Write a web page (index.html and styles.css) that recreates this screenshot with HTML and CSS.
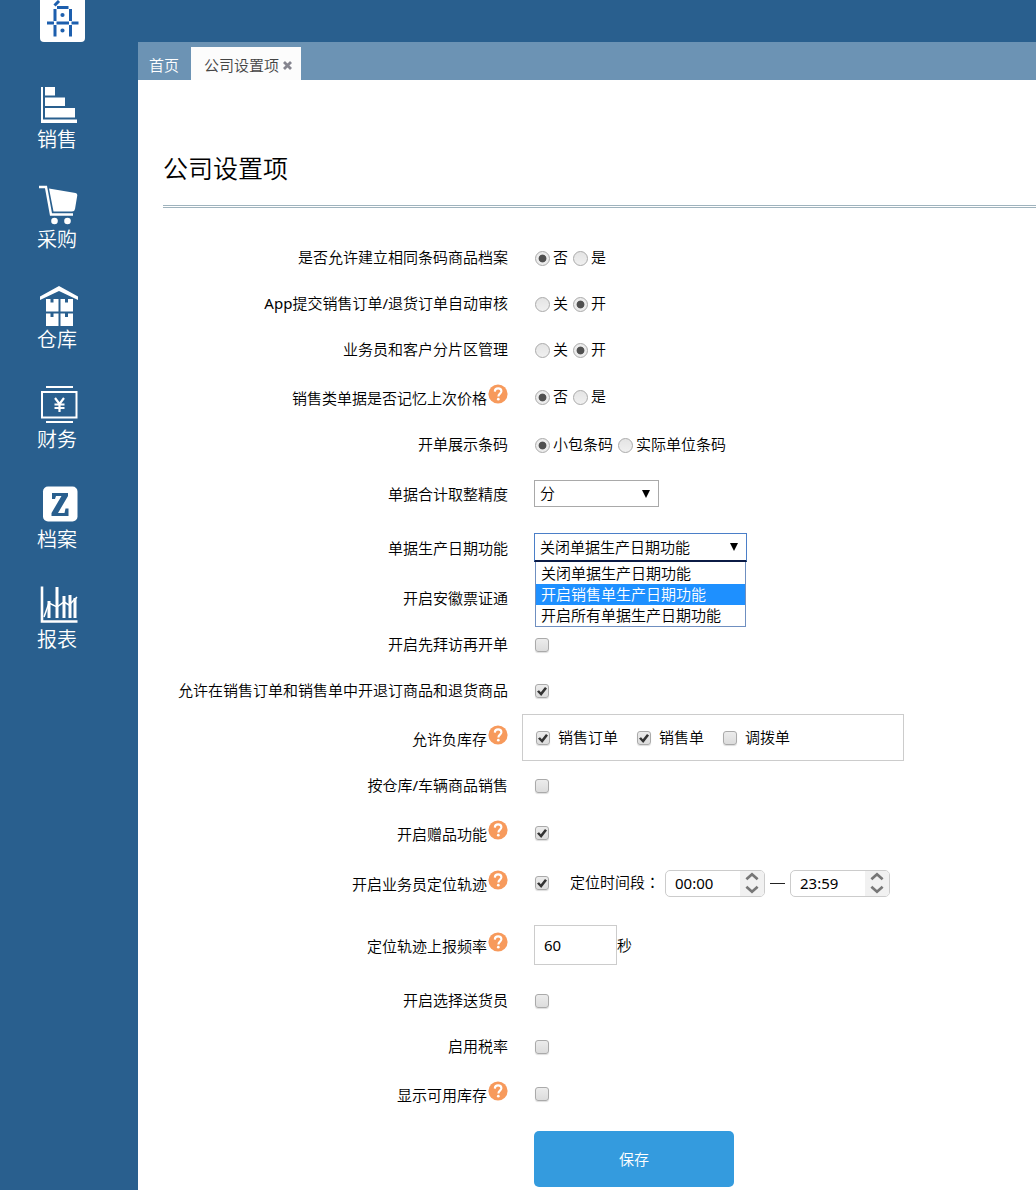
FILE: index.html
```html
<!DOCTYPE html>
<html lang="zh-CN">
<head>
  <meta charset="UTF-8" />
  <meta name="viewport" content="width=device-width, initial-scale=1.0"/>
  <title>公司设置项</title>
  <link rel="stylesheet" href="styles.css">
</head>
<body>
  <svg class="sprite">
    <symbol id="help" viewBox="0 0 20 20">
      <circle cx="10" cy="10" r="9.6" fill="#f79a5c"/>
      <path d="M6.8 7.600C6.900 5.400 8.200 4.400 10.100 4.400c2 0 3.300 1.100 3.300 2.800 0 2.300-3 2.600-3 5.200" fill="none" stroke="#fff" stroke-width="2.1"/>
      <circle cx="10.3" cy="15.2" r="1.35" fill="#fff"/>
    </symbol>
    <symbol id="up" viewBox="0 0 12 8">
      <path d="M1 6.500L6 2l5 4.500" fill="none" stroke="#777" stroke-width="2.4"/>
    </symbol>
    <symbol id="down" viewBox="0 0 12 8">
      <path d="M1 1.500L6 6l5-4.500" fill="none" stroke="#777" stroke-width="2.4"/>
    </symbol>
  </svg>

  <aside class="sidebar">
    <div class="logo">
      <svg width="45" height="42" viewBox="0 0 45 42" fill="none" stroke="#1d5fae" stroke-width="3">
        <path d="M19 1l-4.500 4.500M17 7.500h11.500M15 9v12M30.500 9v12M15 25v11.500M30.500 25v11.500M7 23h7M16.500 23h12.500M31.500 23H38.500"/>
        <circle cx="22.500" cy="15" r="1" stroke-width="2.200"/>
        <circle cx="22.500" cy="30.500" r="1" stroke-width="2.200"/>
      </svg>
    </div>
    <nav class="menu">
      <a class="menu-item">
        <svg width="40" height="40" viewBox="0 0 40 40" fill="#fff">
          <path d="M3 2h2v32.500h34V38H3zM7 2h10v8.500H7zM7 12.500h20v8.500H7zM7 23h30v9.500H7z"/>
        </svg>
        <span>销售</span>
      </a>
      <a class="menu-item">
        <svg width="40" height="40" viewBox="0 0 40 40" fill="#fff">
          <path d="M1 2h7l5 27.500h22" fill="none" stroke="#fff" stroke-width="2.4"/>
          <path d="M11 3.500l26.500 4.500q2 .4 1.800 2.300L37 24q-.4 2.500-3 2.500H15.500z"/>
          <circle cx="16.500" cy="36" r="3.300"/>
          <circle cx="29.500" cy="36" r="3.300"/>
        </svg>
        <span>采购</span>
      </a>
      <a class="menu-item">
        <svg width="40" height="40" viewBox="0 0 40 40" fill="#fff">
          <path d="M2 11.500L21 1l19 10.500V15L21 6 2 15z"/>
          <path d="M8 14h4.500v3.500h3V14h5v12.500H8zM22.500 14h4.500v3.500h3V14h5v12.500H22.500zM8 28.500h4.500V32h3v-3.500h5V41H8zM22.500 28.500h4.500V32h3v-3.500h5V41H22.500z"/>
        </svg>
        <span>仓库</span>
      </a>
      <a class="menu-item">
        <svg width="40" height="40" viewBox="0 0 40 40" fill="none" stroke="#fff" stroke-width="2">
          <path d="M8 2h27M8 37h27M4 7h34.500v25.500H4z"/>
          <path d="M17 13l4.500 6 4.500-6M16.500 19.500h10M16.500 23h10M21.500 19v8" stroke-width="2.200"/>
        </svg>
        <span>财务</span>
      </a>
      <a class="menu-item">
        <svg width="40" height="40" viewBox="0 0 40 40">
          <rect x="5" y="1.500" width="34.500" height="35" rx="5" fill="#fff"/>
          <path d="M14 14V8h16v3L20 28h6.500l1-4.500h3V31H13.500v-3L23.500 11h-5.500l-1 3z" fill="#295f8e"/>
        </svg>
        <span>档案</span>
      </a>
      <a class="menu-item">
        <svg width="40" height="40" viewBox="0 0 40 40" fill="none" stroke="#fff">
          <path d="M4 1.500V36.500h35.500" stroke-width="2.600"/>
          <path d="M11 16v17M19 2v31M26 11v22M32 10v23M37 13v20" stroke-width="3"/>
          <path d="M6 32l5-14 8 4 7-5 5 3 8-8" stroke-width="1.500"/>
        </svg>
        <span>报表</span>
      </a>
    </nav>
  </aside>

  <div class="main">
    <header class="topbar"></header>
    <div class="tabs">
      <a class="tab">首页</a>
      <a class="tab active">公司设置项
        <svg width="9" height="9" viewBox="0 0 9 9"><path d="M1 1l7 7M8 1L1 8" stroke="#85858f" stroke-width="2.800"/></svg>
      </a>
    </div>

    <div class="content">
      <h1>公司设置项</h1>
      <div class="double-line"></div>

      <form class="settings">
        <div class="row">
          <div class="label">是否允许建立相同条码商品档案</div>
          <div class="control">
            <label><input type="radio" name="barcode" checked>否</label>
            <label><input type="radio" name="barcode">是</label>
          </div>
        </div>
        <div class="row">
          <div class="label"><span class="latin">App</span>提交销售订单<span class="latin">/</span>退货订单自动审核</div>
          <div class="control">
            <label><input type="radio" name="audit">关</label>
            <label><input type="radio" name="audit" checked>开</label>
          </div>
        </div>
        <div class="row">
          <div class="label">业务员和客户分片区管理</div>
          <div class="control">
            <label><input type="radio" name="area">关</label>
            <label><input type="radio" name="area" checked>开</label>
          </div>
        </div>
        <div class="row h48">
          <div class="label has-help">销售类单据是否记忆上次价格<svg class="help"><use href="#help"/></svg></div>
          <div class="control">
            <label><input type="radio" name="price" checked>否</label>
            <label><input type="radio" name="price">是</label>
          </div>
        </div>
        <div class="row h48">
          <div class="label">开单展示条码</div>
          <div class="control">
            <label><input type="radio" name="show" checked>小包条码</label>
            <label><input type="radio" name="show">实际单位条码</label>
          </div>
        </div>
        <div class="row h50">
          <div class="label label-select">单据合计取整精度</div>
          <div class="control">
            <div class="select select-small"><span>分</span><i class="arrow"></i></div>
          </div>
        </div>
        <div class="row h57">
          <div class="label label-select">单据生产日期功能</div>
          <div class="control">
            <div class="select select-open">
              <span>关闭单据生产日期功能</span><i class="arrow"></i>
              <ul class="options">
                <li>关闭单据生产日期功能</li>
                <li class="selected">开启销售单生产日期功能</li>
                <li>开启所有单据生产日期功能</li>
              </ul>
            </div>
          </div>
        </div>
        <div class="row h45">
          <div class="label">开启安徽票证通</div>
          <div class="control"></div>
        </div>
        <div class="row h47">
          <div class="label">开启先拜访再开单</div>
          <div class="control"><input type="checkbox"></div>
        </div>
        <div class="row">
          <div class="label">允许在销售订单和销售单中开退订商品和退货商品</div>
          <div class="control"><input type="checkbox" checked></div>
        </div>
        <div class="row h47">
          <div class="label has-help">允许负库存<svg class="help"><use href="#help"/></svg></div>
          <div class="stock-box">
            <label><input type="checkbox" checked>销售订单</label>
            <label><input type="checkbox" checked>销售单</label>
            <label><input type="checkbox">调拨单</label>
          </div>
        </div>
        <div class="row h49">
          <div class="label">按仓库<span class="latin">/</span>车辆商品销售</div>
          <div class="control"><input type="checkbox"></div>
        </div>
        <div class="row h46">
          <div class="label has-help">开启赠品功能<svg class="help"><use href="#help"/></svg></div>
          <div class="control"><input type="checkbox" checked></div>
        </div>
        <div class="row h54">
          <div class="label has-help">开启业务员定位轨迹<svg class="help"><use href="#help"/></svg></div>
          <div class="control">
            <input type="checkbox" checked>
            <span class="time-label">定位时间段<span class="colon" lang="zh-TW">：</span></span>
            <div class="spinner"><span class="latin">00:00</span><div class="spin-btns"><svg><use href="#up"/></svg><svg><use href="#down"/></svg></div></div>
            <span class="dash"></span>
            <div class="spinner"><span class="latin">23:59</span><div class="spin-btns"><svg><use href="#up"/></svg><svg><use href="#down"/></svg></div></div>
          </div>
        </div>
        <div class="row h69">
          <div class="label has-help">定位轨迹上报频率<svg class="help"><use href="#help"/></svg></div>
          <div class="control"><input type="text" class="freq latin" value="60">秒</div>
        </div>
        <div class="row h44">
          <div class="label">开启选择送货员</div>
          <div class="control"><input type="checkbox"></div>
        </div>
        <div class="row h48">
          <div class="label">启用税率</div>
          <div class="control"><input type="checkbox"></div>
        </div>
        <div class="row h46">
          <div class="label has-help">显示可用库存<svg class="help"><use href="#help"/></svg></div>
          <div class="control"><input type="checkbox"></div>
        </div>
        <button type="button" class="save">保存</button>
      </form>
    </div>
  </div>
</body>
</html>
```

FILE: styles.css
```css
* {
  box-sizing: border-box;
}

body {
  margin: 0;
  display: flex;
  height: 1190px;
  overflow: hidden;
  font-family: "Noto Sans", "Noto Sans CJK SC", sans-serif;
  font-size: 15px;
  font-weight: 350;
  color: #000;
  background: #fff;
}

.sprite {
  display: none;
}

/* sidebar */
.sidebar {
  width: 138px;
  flex: none;
  background: #295f8e;
}

.logo {
  width: 45px;
  height: 42px;
  margin-left: 40px;
  background: #fff;
  border-radius: 0 0 4px 4px;
}

.logo svg {
  display: block;
}

.menu {
  padding-top: 43px;
}

.menu-item {
  display: flex;
  flex-direction: column;
  height: 100px;
  padding-left: 38px;
  color: #fff;
  font-size: 20px;
  line-height: 30px;
}

.menu-item svg {
  overflow: visible;
}

.menu-item span {
  margin-left: -1px;
}

/* top */
.main {
  flex: 1;
  min-width: 0;
}

.topbar {
  height: 42px;
  background: #295f8e;
}

.tabs {
  display: flex;
  height: 38px;
  padding-top: 5px;
  background: #6c93b4;
}

.tab {
  display: flex;
  align-items: center;
  padding: 1px 12px 0 11px;
  color: #fff;
}

.tab.active {
  width: 110px;
  padding: 1px 0 0 13px;
  gap: 4px;
  background: #fcfcfc;
  color: #444;
}

.tab svg {
  margin-top: 2px;
}

.content {
  padding: 70px 0 0 25px;
}

h1 {
  margin: 0;
  height: 36px;
  line-height: 36px;
  font-size: 25px;
  font-weight: 350;
}

.double-line {
  height: 3px;
  margin-top: 19px;
  border-top: 1px solid #9fb3bd;
  border-bottom: 1px solid #9fb3bd;
}

/* form */
.settings {
  padding-top: 27px;
}

.row {
  display: flex;
  align-items: center;
  height: 46px;
}

.h44 { height: 44px; }
.h45 { height: 45px; }
.h46 { height: 46px; }
.h47 { height: 47px; }
.h48 { height: 48px; }
.h49 { height: 49px; }
.h50 { height: 50px; }
.h54 { height: 54px; }
.h57 { height: 57px; }
.h69 { height: 69px; }

.label {
  display: flex;
  justify-content: flex-end;
  width: 345px;
  flex: none;
  padding-bottom: 2px;
  line-height: 22px;
  white-space: nowrap;
}

.label-select {
  padding-bottom: 0;
}

.latin {
  font-weight: 400;
}

.has-help {
  padding: 2px 0 0;
}

.help {
  width: 20px;
  height: 20px;
  margin: -3px 0 0 1px;
}

.control {
  display: flex;
  align-items: center;
  padding-left: 27px;
  line-height: 22px;
}

.control label,
.stock-box label {
  display: flex;
  align-items: center;
}

.control label {
  margin: -2px 5px 0 0;
}

input[type="radio"] {
  appearance: none;
  width: 15px;
  height: 15px;
  margin: 3px 3px 0 0;
  border: 1px solid #aaa;
  border-radius: 50%;
  background: linear-gradient(#e4e4e4, #f0f0f0);
}

input[type="radio"]:checked {
  background: radial-gradient(circle, #505050 3.500px, #ececec 4.300px);
}

input[type="checkbox"] {
  appearance: none;
  width: 14px;
  height: 14px;
  margin: 0;
  border: 1px solid #aaa;
  border-radius: 3px;
  background: linear-gradient(#ececec, #dcdcdc);
  box-shadow: 0 1px 1px #ddd;
}

input[type="checkbox"]:checked::before {
  content: '';
  display: block;
  width: 10px;
  height: 9px;
  margin: 2px 1px;
  background: #333;
  clip-path: polygon(0 50%, 20% 36%, 38% 58%, 80% 0, 100% 18%, 42% 100%);
}

.select {
  position: relative;
  display: flex;
  align-items: center;
  justify-content: space-between;
  height: 27px;
  margin-left: -1px;
  padding: 0 8px 0 5px;
  border: 1px solid #a9a9a9;
}

.select span {
  margin-top: -1px;
}

.select-small {
  width: 125px;
  margin-top: -1px;
}

.select-open {
  width: 213px;
  height: 29px;
  border: 1px solid #4b7fc8;
  border-bottom: 2px solid #0b1b45;
}

.arrow {
  border: 4px solid transparent;
  border-top: 8px solid #000;
  border-bottom: 0;
}

.options {
  position: absolute;
  top: 28px;
  left: 0;
  z-index: 10;
  width: 211px;
  margin: 0;
  padding: 1px 0 0;
  list-style: none;
  background: #fff;
  border: 1px solid #6f8fc0;
  border-top: 0;
}

.options li {
  height: 21px;
  padding-left: 5px;
  line-height: 20px;
}

.options .selected {
  background: #1e90ff;
  color: #fff;
}

.stock-box {
  display: flex;
  align-items: center;
  gap: 19px;
  width: 382px;
  height: 47px;
  margin-left: 14px;
  padding: 0 0 2px 13px;
  border: 1px solid #ccc;
}

.stock-box input[type="checkbox"] {
  margin: 3px 8px 0 0;
}

.time-label {
  margin: -2px 5px 0 21px;
}

.colon {
  font-family: "Noto Sans CJK TC", sans-serif;
}

.spinner {
  display: flex;
  justify-content: space-between;
  align-items: center;
  width: 100px;
  height: 27px;
  padding-left: 9px;
  border: 1px solid #ccc;
  border-radius: 5px;
  overflow: hidden;
}

.spin-btns {
  display: flex;
  flex-direction: column;
  align-items: center;
  justify-content: center;
  gap: 4px;
  width: 24px;
  height: 25px;
  background: #f1f1f1;
}

.spin-btns svg {
  width: 14px;
  height: 9px;
}

.dash {
  width: 15px;
  height: 1px;
  margin: 0 5px;
  background: #222;
}

.freq {
  width: 83px;
  height: 40px;
  margin-left: -1px;
  padding: 0 9px;
  border: 1px solid #ccc;
  font-family: inherit;
  font-size: 15px;
}

.save {
  display: block;
  width: 200px;
  height: 56px;
  margin: 14px 0 0 371px;
  padding-bottom: 3px;
  border: none;
  border-radius: 5px;
  background: #349bde;
  color: #fff;
  font: inherit;
}
```
